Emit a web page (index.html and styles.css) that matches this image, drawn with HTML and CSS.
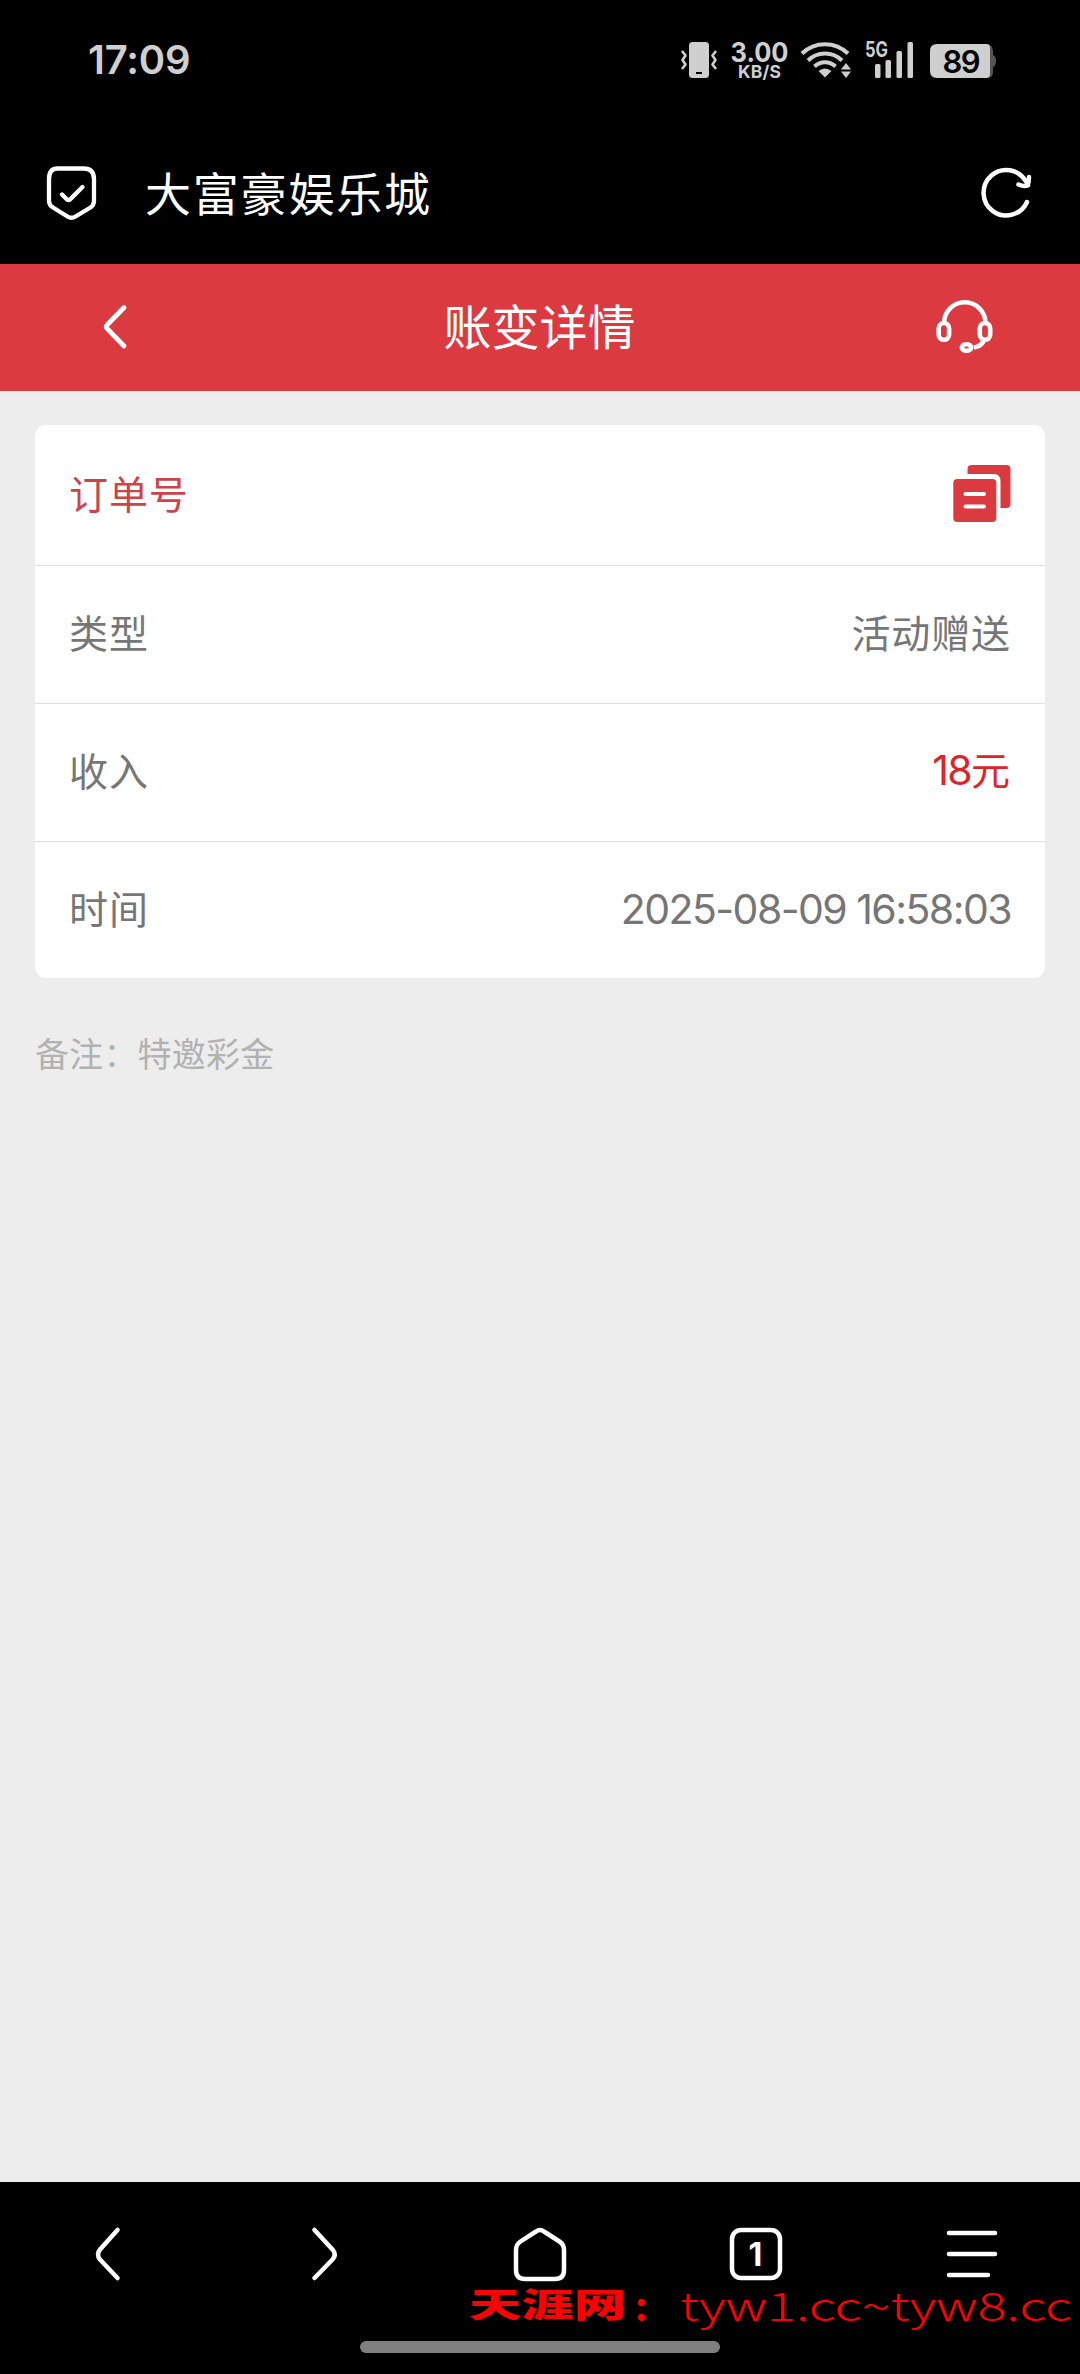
FILE: index.html
```html
<!DOCTYPE html>
<html lang="zh-CN">
<head>
<meta charset="utf-8">
<title>账变详情</title>
<link rel="stylesheet" href="styles.css">
</head>
<body>
<div class="screen">
  <div class="status">
    <span class="clock">17:09</span>
    <svg class="status-icons" width="320" height="60" viewBox="680 30 320 60">
      <g fill="#cfcfcf">
        <rect x="689" y="42" width="20" height="36" rx="3.5"/>
        <rect x="696" y="72" width="6" height="2" fill="#000"/>
        <g fill="none" stroke="#cfcfcf" stroke-width="2.6" stroke-linejoin="round">
          <path d="M682 51l3.500 4.500-3 4.500 3 4.500-3.500 4.500M716 51l-3.500 4.500 3 4.500-3 4.500 3.500 4.500"/>
        </g>
        <text class="bold" x="730.500" y="61.500" font-size="27" textLength="58" lengthAdjust="spacingAndGlyphs">3.00</text>
        <text class="bold" x="738" y="77.500" font-size="17.500" textLength="43">KB/S</text>
        <g fill="none" stroke="#cfcfcf" stroke-width="4">
          <path d="M802 53.500a33 33 0 0 1 46 0M808 60.500a24 24 0 0 1 34 0M814.500 66.500a15 15 0 0 1 21 0"/>
        </g>
        <path d="M825 77.500l-6.500-6.500q6.500-5 13 0z"/>
        <path d="M841 69.500l5-6.500 5 6.500zM841 71.500l5 6.500 5-6.500z" stroke="#000" stroke-width="1" paint-order="stroke"/>
        <text class="bold" x="865" y="57" font-size="21" textLength="23" lengthAdjust="spacingAndGlyphs">5G</text>
        <rect x="875" y="64" width="5.500" height="14" rx="1.500"/>
        <rect x="885.500" y="60" width="5.500" height="18" rx="1.500"/>
        <rect x="896.500" y="51" width="5.500" height="27" rx="1.500"/>
        <rect x="907.500" y="42" width="5.500" height="36" rx="1.500"/>
        <path d="M986 44h1q6 1 6 7v4q3 1 3 6t-3 6v5q0 5-5 6h-2z" fill="#555"/>
        <path d="M937 44h49q4 0 4 4v26q0 4-4 4h-49q-7 0-7-7v-20q0-7 7-7z"/>
        <text class="semi" x="942.500" y="72.500" font-size="31" fill="#000" textLength="38">89</text>
      </g>
    </svg>
  </div>

  <div class="address">
    <svg width="52" height="58" viewBox="45 164 52 58" fill="none" stroke="#fff" stroke-width="4.300" stroke-linecap="round" stroke-linejoin="round">
      <path d="M57.500 168.500H83.500Q94 168.500 94 179V201Q94 205 90.500 207.500L75.500 216.500Q71.500 219 67.500 216.500L53 207.500Q49 205 49 201V179Q49 168.500 57.500 168.500z"/>
      <path d="M62 194.500l5 5q1.500 1.200 3 0L82.500 187"/>
    </svg>
    <span class="site">大富豪娱乐城</span>
    <svg width="54" height="54" viewBox="979 165 54 54" fill="none" stroke="#fff" stroke-width="4.500" stroke-linecap="round" stroke-linejoin="round">
      <path d="M1027 201A22.700 22.700 0 1 1 1026 180.500L1028 184"/>
      <path d="M1018.500 183.500Q1024 186 1027.500 184.500 1029 181 1029 176"/>
    </svg>
  </div>

  <div class="header">
    <svg width="28" height="48" viewBox="101 303 28 48" fill="none" stroke="#fff" stroke-width="4.800" stroke-linecap="round" stroke-linejoin="round">
      <path d="M124 307.500L107 325q-1.500 1.700 0 3.400L124 346"/>
    </svg>
    <h1>账变详情</h1>
    <svg width="60" height="56" viewBox="935 298 60 56" fill="none" stroke="#fff" stroke-width="4.600">
      <path d="M944 322a20.500 20.500 0 0 1 41.500 0"/>
      <rect x="938.700" y="322" width="10.400" height="16.800" rx="5.200"/>
      <rect x="979.800" y="322" width="10.400" height="16.800" rx="5.200"/>
      <path d="M984 339q-2 6-10 7.500"/>
      <ellipse cx="966.500" cy="346.500" rx="4.700" ry="3.300"/>
    </svg>
  </div>

  <main>
    <div class="card">
      <div class="row order">
        <span>订单号</span>
        <svg width="58" height="58" viewBox="953 464 58 58" fill="#dc3a41">
          <path d="M967.500 474v-5q0-4 4-4h35q4 0 4 4v35q0 4-4 4h-6v-27q0-7-7-7z"/>
          <rect x="953.300" y="479" width="43" height="43" rx="4"/>
          <g fill="#fff"><rect x="963.500" y="492" width="22.500" height="4" rx="2"/><rect x="963.500" y="504.500" width="22.500" height="4" rx="2"/></g>
        </svg>
      </div>
      <div class="row"><span>类型</span><span>活动赠送</span></div>
      <div class="row"><span>收入</span><span class="income"><span class="num">18</span>元</span></div>
      <div class="row"><span>时间</span><span class="date">2025-08-09 16:58:03</span></div>
    </div>
    <p class="note">备注：特邀彩金</p>
  </main>

  <nav class="nav">
    <svg viewBox="0 0 60 60"><path d="M39.500 6L22 25.500Q18 30.500 22 35.500L39.500 54"/></svg>
    <svg viewBox="0 0 60 60"><path d="M20.500 6L38.500 25.500Q43 30.500 38.500 35.500L20.500 54"/></svg>
    <svg viewBox="0 0 60 60"><path d="M26 7.500Q30 4.500 34 7.500L49.500 17.500Q54 20.500 54 26V46Q54 55 45 55H15Q6 55 6 46V26Q6 20.500 10.500 17.500z"/></svg>
    <svg viewBox="0 0 60 60"><rect x="6" y="6" width="48" height="48" rx="9"/><text class="bold" x="29.500" y="42" text-anchor="middle" font-size="32">1</text></svg>
    <svg viewBox="0 0 60 60"><path d="M7 9H53M7 30H53M7 51H46"/></svg>
  </nav>
  <div class="handle"></div>

  <svg class="watermark" width="620" height="64" viewBox="460 2276 620 64" fill="#f00">
    <text class="mark-name" x="469" y="2317" font-size="33" textLength="157" lengthAdjust="spacingAndGlyphs">天涯网</text>
    <text class="mark-colon" x="635" y="2321" font-size="38">:</text>
    <text class="mark-url" x="680" y="2320.500" font-size="39" textLength="392" lengthAdjust="spacingAndGlyphs">tyw1.cc~tyw8.cc</text>
  </svg>
</div>
</body>
</html>
```

FILE: styles.css
```css
* { box-sizing: border-box; }

body {
  margin: 0;
  background: #000;
  font-family: "Noto Sans CJK SC", sans-serif;
}

.screen {
  position: relative;
  display: flex;
  flex-direction: column;
  width: 1080px;
  height: 2374px;
  overflow: hidden;
  background: #ededed;
}

.bold {
  font-family: Inter, sans-serif;
  font-weight: 700;
}

.semi {
  font-family: Inter, sans-serif;
  font-weight: 600;
}

.status {
  display: flex;
  flex: none;
  align-items: center;
  justify-content: space-between;
  height: 120px;
  padding: 0 80px 0 88px;
  background: #000;
}

.clock {
  color: #cfcfcf;
  font: 600 40px/1 Inter, sans-serif;
  letter-spacing: -0.2px;
}

.address {
  display: flex;
  flex: none;
  align-items: center;
  height: 144px;
  padding: 1px 47px 0 45px;
  background: #000;
}

.site {
  flex: 1;
  margin-left: 48px;
  padding-bottom: 4px;
  color: #fff;
  font-size: 46px;
  line-height: 60px;
  letter-spacing: 1.8px;
}

.header {
  display: flex;
  flex: none;
  align-items: center;
  justify-content: space-between;
  height: 127px;
  padding: 0 85px 2px 101px;
  background: #dc3a41;
}

.header h1 {
  margin: 0 0 0 15px;
  padding-bottom: 5px;
  color: #fff;
  font-size: 48px;
  font-weight: 400;
  line-height: 60px;
}

main {
  flex: 1;
  padding: 34px 35px 0;
}

.card {
  border-radius: 11px;
  background: #fff;
}

.row {
  display: flex;
  align-items: center;
  justify-content: space-between;
  height: 138px;
  padding: 0 34px 8px;
  border-bottom: 1px solid #dedede;
  color: #767676;
  font-size: 39px;
  line-height: 50px;
  letter-spacing: 0.9px;
}

.row:first-child { height: 141px; }

.row:last-child {
  height: 136px;
  padding-bottom: 6px;
  border-bottom: 0;
}

.row.order {
  padding-bottom: 4px;
  color: #cc444b;
}

.order span { padding-bottom: 2px; }
.income { color: #dd2528; }

.num, .date {
  font-family: Inter, sans-serif;
  font-size: 41px;
  letter-spacing: -1.55px;
}

.date { padding-top: 4px; }

.note {
  margin: 50px 0 0;
  color: #b2b2b2;
  font-size: 34px;
  line-height: 50px;
  letter-spacing: 0.2px;
}

.nav {
  display: grid;
  grid-template-columns: repeat(5, 1fr);
  flex: none;
  justify-items: center;
  height: 192px;
  padding-top: 42px;
  background: #000;
}

.nav svg {
  width: 60px;
  height: 60px;
  fill: none;
  stroke: #fff;
  stroke-width: 4.500;
  stroke-linecap: round;
  stroke-linejoin: round;
}

.nav text { fill: #fff; stroke: none; }

.handle {
  position: absolute;
  bottom: 21px;
  left: 360px;
  width: 360px;
  height: 12px;
  border-radius: 6px;
  background: #808080;
}

.watermark {
  position: absolute;
  right: 0;
  bottom: 34px;
}

.mark-name { font-weight: 900; }
.mark-colon { font-weight: 700; }
.mark-url { font-weight: 300; }
```
